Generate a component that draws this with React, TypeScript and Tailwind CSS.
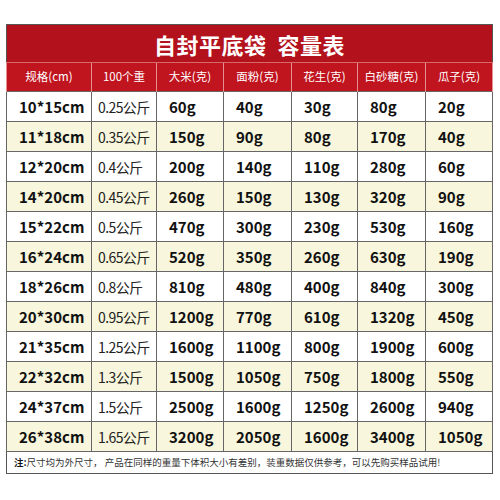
import * as React from 'react'

const headers = ['规格(cm)', '100个重', '大米(克)', '面粉(克)', '花生(克)', '白砂糖(克)', '瓜子(克)']
const widths = [85, 65, 67, 68, 66, 68, 67]

const rows: Array<Array<string>> = [
  ['10*15cm', '0.25公斤', '60g', '40g', '30g', '80g', '20g'],
  ['11*18cm', '0.35公斤', '150g', '90g', '80g', '170g', '40g'],
  ['12*20cm', '0.4公斤', '200g', '140g', '110g', '280g', '60g'],
  ['14*20cm', '0.45公斤', '260g', '150g', '130g', '320g', '90g'],
  ['15*22cm', '0.5公斤', '470g', '300g', '230g', '530g', '160g'],
  ['16*24cm', '0.65公斤', '520g', '350g', '260g', '630g', '190g'],
  ['18*26cm', '0.8公斤', '810g', '480g', '400g', '840g', '300g'],
  ['20*30cm', '0.95公斤', '1200g', '770g', '610g', '1320g', '450g'],
  ['21*35cm', '1.25公斤', '1600g', '1100g', '800g', '1900g', '600g'],
  ['22*32cm', '1.3公斤', '1500g', '1050g', '750g', '1800g', '550g'],
  ['24*37cm', '1.5公斤', '2500g', '1600g', '1250g', '2600g', '940g'],
  ['26*38cm', '1.65公斤', '3200g', '2050g', '1600g', '3400g', '1050g'],
]

export default function App() {
  return (
    <div className="h-[500px] w-[500px] bg-white pt-[24px] pl-[6px] font-['Noto_Sans_CJK_SC',sans-serif] text-[#111]">
      <table className="w-[486px] table-fixed border-collapse border border-[#555]">
        <colgroup>
          {widths.map((w, i) => (
            <col key={i} style={{ width: w }} />
          ))}
        </colgroup>
        <thead>
          <tr className="h-[38px] bg-[#b3111c]">
            <th
              colSpan={7}
              className="border-b border-[#d86a6a] text-center text-[22px] font-bold leading-none tracking-[0.5px] text-white"
            >
              自封平底袋&nbsp;&nbsp;容量表
            </th>
          </tr>
          <tr className="h-[29px] bg-[#c0141f]">
            {headers.map((h) => (
              <th
                key={h}
                className="border-x border-[#e39090] text-center text-[11.5px] font-normal leading-none whitespace-nowrap text-white"
              >
                {h}
              </th>
            ))}
          </tr>
        </thead>
        <tbody>
          {rows.map((row, r) => (
            <tr key={r} className={`h-[30px] ${r % 2 === 1 ? 'bg-[#f8f6dc]' : 'bg-white'}`}>
              {row.map((cell, c) => (
                <td
                  key={c}
                  className={`border border-[#666] text-left leading-none whitespace-nowrap ${
                    c === 1
                      ? 'pl-[6px] text-[14px] font-normal tracking-[-0.6px] text-[#222]'
                      : 'pl-[12px] text-[15px] font-bold'
                  }`}
                >
                  {cell}
                </td>
              ))}
            </tr>
          ))}
          <tr className="h-[22px] bg-white">
            <td colSpan={7} className="border border-[#555] pl-[7px] text-[9.5px] leading-none whitespace-nowrap text-[#333]">
              <span className="font-bold text-[#111]">注:</span>
              尺寸均为外尺寸， 产品在同样的重量下体积大小有差别，装重数据仅供参考，可以先购买样品试用!
            </td>
          </tr>
        </tbody>
      </table>
    </div>
  )
}
